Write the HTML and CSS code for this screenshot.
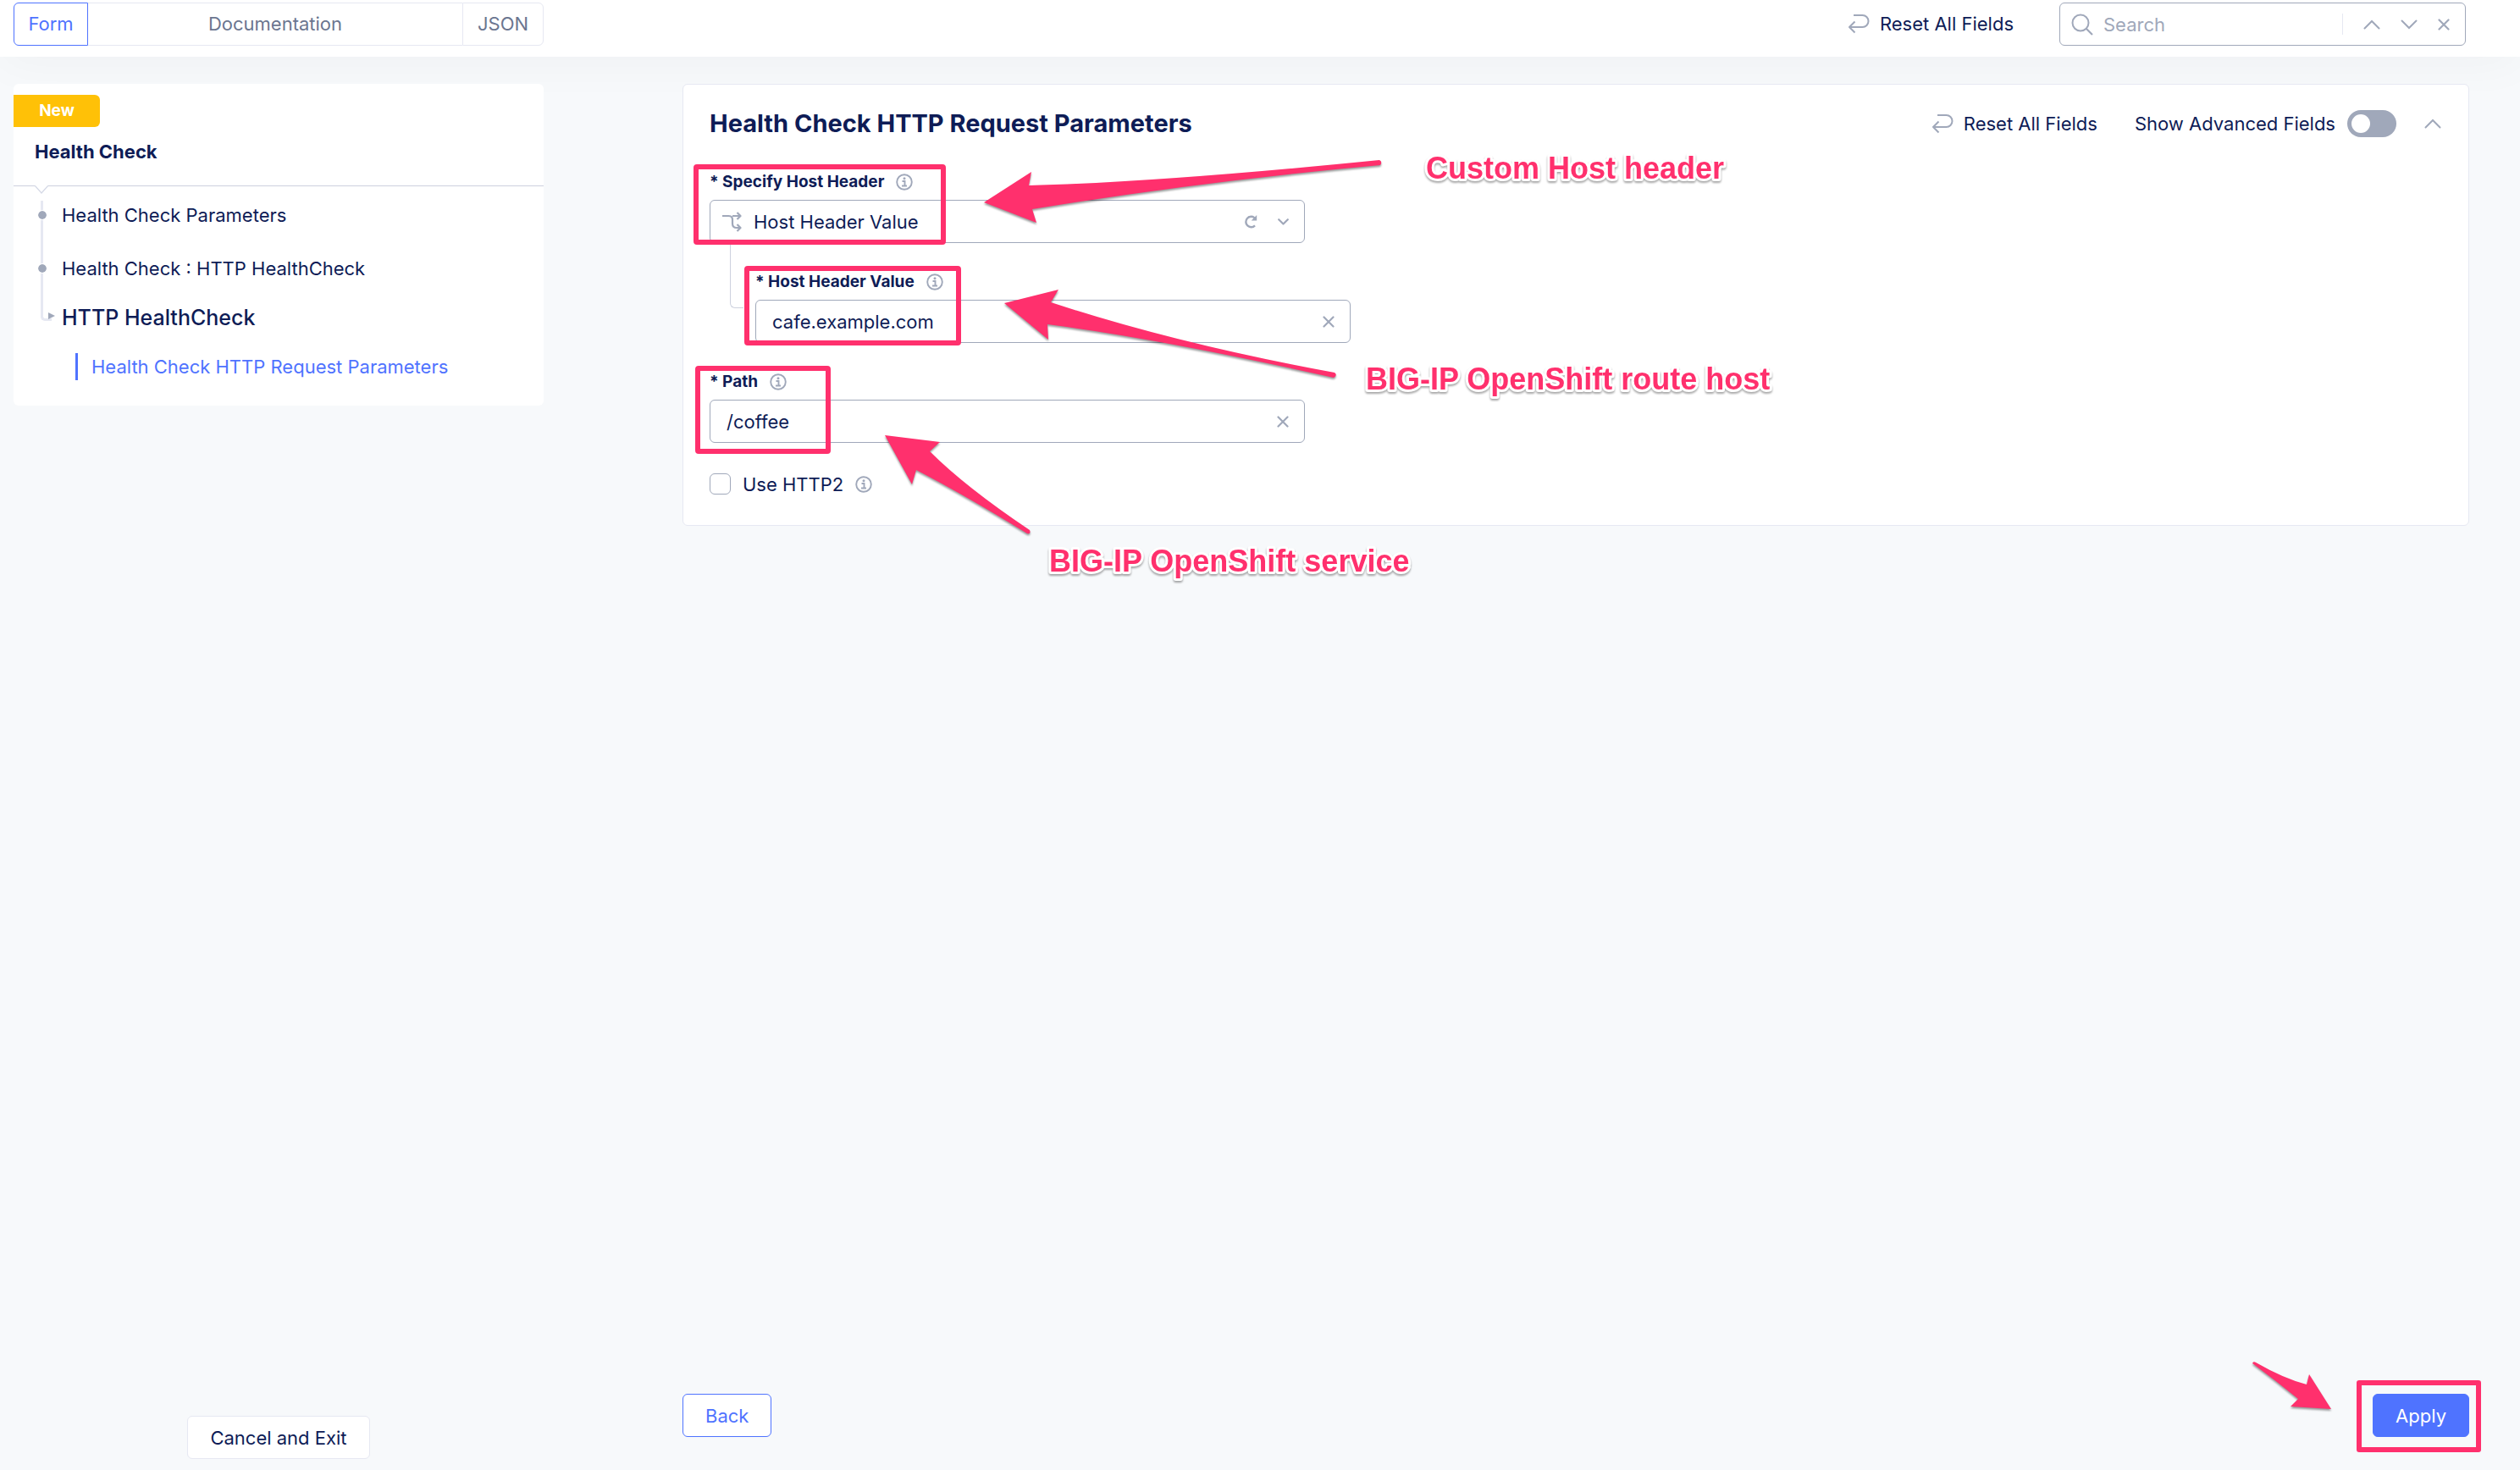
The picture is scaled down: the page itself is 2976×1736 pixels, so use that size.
FILE: index.html
```html
<!DOCTYPE html>
<html lang="en">
<head>
<meta charset="utf-8">
<title>Health Check</title>
<link rel="stylesheet" href="styles.css">
</head>
<body>
<svg class="sprite" aria-hidden="true">
  <symbol id="i-reset" viewBox="0 0 26 24"><path d="M7 2h10.500a7 7 0 0 1 0 14H2.500M8.500 9.500L2 16l6.500 6.500" fill="none" stroke="currentColor" stroke-width="2" stroke-linejoin="round"/></symbol>
  <symbol id="i-search" viewBox="0 0 26 26"><circle cx="11" cy="11" r="9.500" fill="none" stroke="currentColor" stroke-width="2"/><path d="M17.500 17.500L25 25" stroke="currentColor" stroke-width="2.200"/></symbol>
  <symbol id="i-up" viewBox="0 0 20 12"><path d="M1.500 10.500L10 2l8.500 8.500" fill="none" stroke="currentColor" stroke-width="2" stroke-linecap="round"/></symbol>
  <symbol id="i-down" viewBox="0 0 20 12"><path d="M1.500 1.500L10 10l8.500-8.500" fill="none" stroke="currentColor" stroke-width="2" stroke-linecap="round"/></symbol>
  <symbol id="i-caret" viewBox="0 0 13 8"><path d="M1.200 1.200l5.300 5.300 5.300-5.300" fill="none" stroke="currentColor" stroke-width="2.200" stroke-linecap="round" stroke-linejoin="round"/></symbol>
  <symbol id="i-close" viewBox="0 0 14 14"><path d="M1.500 1.500l11 11M12.500 1.500l-11 11" stroke="currentColor" stroke-width="2.200" stroke-linecap="round"/></symbol>
  <symbol id="i-info" viewBox="0 0 20 20"><circle cx="10" cy="10" r="8.800" fill="none" stroke="currentColor" stroke-width="1.900"/><circle cx="10" cy="5.800" r="1.500" fill="currentColor"/><path d="M7.500 9h3v5M7 14.500h6" fill="none" stroke="currentColor" stroke-width="1.900"/></symbol>
  <symbol id="i-branch" viewBox="0 0 23 24"><path d="M0 5h7.500q4.500 0 4.500 4.500V14q0 5 5 5h4.500M12 5h9.500M17.500 1l4 4-4 4M17.500 15l4 4-4 4" fill="none" stroke="currentColor" stroke-width="2.200" stroke-linejoin="round"/></symbol>
  <symbol id="i-refresh" viewBox="0 0 16 16"><path d="M13 12.300A6.200 6.200 0 1 1 12.800 3.500" fill="none" stroke="currentColor" stroke-width="2.400"/><path d="M15.200 0v6.500H8.700z" fill="currentColor"/></symbol>
</svg>

<header class="topbar">
  <div class="tabs">
    <button class="tab tab-form active" type="button">Form</button>
    <button class="tab tab-docs" type="button">Documentation</button>
    <button class="tab tab-json" type="button">JSON</button>
  </div>
  <div class="tools">
    <button class="reset" type="button"><svg class="ic-reset"><use href="#i-reset"/></svg>Reset All Fields</button>
    <div class="search">
      <svg class="ic-search"><use href="#i-search"/></svg>
      <input type="text" placeholder="Search" aria-label="Search">
      <span class="divider"></span>
      <button class="icon-btn" type="button" aria-label="Previous match"><svg class="ic-chevron"><use href="#i-up"/></svg></button>
      <button class="icon-btn" type="button" aria-label="Next match"><svg class="ic-chevron"><use href="#i-down"/></svg></button>
      <button class="icon-btn" type="button" aria-label="Close search"><svg class="ic-close"><use href="#i-close"/></svg></button>
    </div>
  </div>
</header>

<div class="layout">
  <aside class="side">
    <div class="card">
      <div class="card-head">
        <span class="badge">New</span>
        <h1 class="card-title">Health Check</h1>
      </div>
      <nav class="steps">
        <svg class="notch" viewBox="0 0 16 10"><path d="M0 0L8 9l8-9z" fill="#fff"/><path d="M0 0l8 9 8-9" fill="none" stroke="#d5d9e6" stroke-width="1.300"/></svg>
        <a class="step" href="#parameters">Health Check Parameters</a>
        <a class="step" href="#type">Health Check : HTTP HealthCheck</a>
        <a class="step-group" href="#http">HTTP HealthCheck</a>
        <a class="step-active" href="#request">Health Check HTTP Request Parameters</a>
      </nav>
    </div>
    <button class="btn cancel" type="button">Cancel and Exit</button>
  </aside>

  <main class="main">
    <section class="panel" id="request">
      <div class="panel-head">
        <h2 class="panel-title">Health Check HTTP Request Parameters</h2>
        <button class="reset" type="button"><svg class="ic-reset"><use href="#i-reset"/></svg>Reset All Fields</button>
        <label class="advanced" for="advanced">Show Advanced Fields <input class="toggle" id="advanced" type="checkbox" role="switch"></label>
        <button class="icon-btn" type="button" aria-label="Collapse"><svg class="ic-chevron"><use href="#i-up"/></svg></button>
      </div>

      <div class="fields">
        <div class="field">
          <div class="label"><label for="mode">* Specify Host Header</label><svg class="ic-info"><use href="#i-info"/></svg></div>
          <div class="control">
            <svg class="ic-branch"><use href="#i-branch"/></svg>
            <select id="mode"><option>Host Header Value</option></select>
            <button class="icon-btn" type="button" aria-label="Revert"><svg class="ic-refresh"><use href="#i-refresh"/></svg></button>
            <svg class="ic-caret"><use href="#i-caret"/></svg>
          </div>
        </div>
        <div class="field nested">
          <div class="label"><label for="host">* Host Header Value</label><svg class="ic-info"><use href="#i-info"/></svg></div>
          <div class="control">
            <input id="host" type="text" value="cafe.example.com">
            <button class="icon-btn" type="button" aria-label="Clear host"><svg class="ic-close"><use href="#i-close"/></svg></button>
          </div>
        </div>
        <div class="field">
          <div class="label"><label for="path">* Path</label><svg class="ic-info"><use href="#i-info"/></svg></div>
          <div class="control">
            <input id="path" type="text" value="/coffee">
            <button class="icon-btn" type="button" aria-label="Clear path"><svg class="ic-close"><use href="#i-close"/></svg></button>
          </div>
        </div>
        <div class="check">
          <input class="checkbox" id="http2" type="checkbox">
          <label for="http2">Use HTTP2</label>
          <svg class="ic-info"><use href="#i-info"/></svg>
        </div>
      </div>
    </section>

    <svg class="notes" viewBox="806 99 1330 620">
      <g class="note-box">
        <rect x="822" y="197" width="292" height="89" rx="1"/>
        <rect x="882" y="317" width="250" height="88" rx="1"/>
        <rect x="824" y="435" width="154" height="98" rx="1"/>
      </g>
      <g class="note-arrow">
        <path d="M1162 239L1218 203L1215 219Q1370 215 1629 189Q1633 191 1630 195Q1420 214 1219 247L1224 263Z"/>
        <path d="M1186 358L1250 342L1241 357Q1390 406 1576 440Q1580 443 1575 446Q1370 400 1237 383L1238 401Z"/>
        <path d="M1045 514L1110 522L1098 533Q1140 575 1216 626Q1218 631 1213 630Q1140 585 1082 555L1077 572Z"/>
      </g>
      <g class="note-text">
        <text x="1684" y="211">Custom Host header</text>
        <text x="1613" y="460">BIG-IP OpenShift route host</text>
        <text x="1239" y="675">BIG-IP OpenShift service</text>
      </g>
    </svg>

    <footer class="actions">
      <button class="btn back" type="button">Back</button>
      <div class="apply-wrap">
        <button class="btn apply" type="button">Apply</button>
        <svg class="apply-arrow note-arrow" viewBox="0 0 100 64"><path d="M1 4Q2 1 5 3Q38 22 65 29L68 17L94 58L46 55L55 46Q28 24 1 4Z"/></svg>
      </div>
    </footer>
  </main>
</div>
</body>
</html>
```
FILE: styles.css
```css
:root {
  --navy: #0e1c56;
  --blue: #4f73ff;
  --grey: #a0a8ba;
  --line: #e6e8f2;
  --pink: #ff306d;
}

* { box-sizing: border-box; }

body {
  margin: 0;
  min-height: 100vh;
  display: flex;
  flex-direction: column;
  position: relative;
  overflow-x: hidden;
  background: #f7f9fb;
  color: var(--navy);
  font: 400 22px/28px Inter, "Open Sans", sans-serif;
}

button, input, select {
  margin: 0;
  padding: 0;
  border: 0;
  background: none;
  color: inherit;
  font: inherit;
  outline: 0;
}

a { color: inherit; text-decoration: none; }
h1, h2 { margin: 0; }
svg { display: block; flex: none; color: var(--grey); }

.sprite { position: absolute; width: 0; height: 0; }
.ic-reset { width: 26px; height: 24px; }
.ic-search { width: 26px; height: 26px; }
.ic-chevron { width: 20px; height: 12px; }
.ic-caret { width: 13px; height: 8px; }
.ic-close { width: 14px; height: 14px; }
.ic-info { width: 20px; height: 20px; }
.ic-branch { width: 23px; height: 24px; }
.ic-refresh { width: 16px; height: 16px; }

/* Top bar */
.topbar {
  display: flex;
  justify-content: space-between;
  padding: 3px 64px 13px 16px;
  background: #fff;
  box-shadow: 0 8px 56px rgba(0, 0, 0, .035);
}

.tabs { display: flex; width: 626px; }

.tab {
  height: 51px;
  padding-bottom: 2px;
  border: 1px solid var(--line);
  color: #6b7690;
}

.tab-form { width: 88px; border-radius: 6px 0 0 6px; }
.tab-docs { flex: 1; border-width: 1px 0; }
.tab-json { width: 96px; border-radius: 0 6px 6px 0; }
.tab.active { border-color: var(--blue); color: var(--blue); }

.tools { display: flex; gap: 54px; }

.reset { display: flex; align-items: center; gap: 12px; }
.tools .reset { padding-bottom: 2px; }

.search {
  display: flex;
  align-items: center;
  gap: 24px;
  width: 480px;
  height: 51px;
  padding: 0 18px 0 13px;
  border: 1px solid var(--grey);
  border-radius: 6px;
}

.search input { flex: 1; min-width: 0; margin-left: -12px; }
.search input::placeholder { color: var(--grey); opacity: 1; }
.divider { width: 1px; height: 25px; background: var(--line); }

/* Two-column layout */
.layout {
  flex: 1;
  display: grid;
  grid-template-columns: 626px 1fr;
  gap: 164px;
  padding: 32px 60px 0 16px;
}

.side {
  display: flex;
  flex-direction: column;
  justify-content: space-between;
  align-items: center;
  padding-bottom: 13px;
}

.card {
  align-self: stretch;
  border-radius: 6px;
  background: #fff;
}

.card-head {
  padding: 13px 0 11px;
  border-bottom: 1px solid #cdd1de;
}

.badge {
  display: block;
  width: 102px;
  border-radius: 0 6px 6px 0;
  background: #ffc107;
  color: #fff;
  font-size: 19px;
  font-weight: 700;
  line-height: 38px;
  text-align: center;
}

.card-title {
  padding-left: 25px;
  font-size: 22px;
  font-weight: 700;
  line-height: 58px;
}

.steps {
  position: relative;
  display: flex;
  flex-direction: column;
  padding: 3px 0 30px 57px;
}

.steps::before {
  content: "";
  position: absolute;
  top: 17px;
  left: 32px;
  width: 10px;
  height: 139px;
  border: solid var(--line);
  border-width: 0 0 3px 3px;
  border-radius: 0 0 0 5px;
}

.notch { position: absolute; top: -1px; left: 25px; width: 16px; height: 10px; }

.step { position: relative; line-height: 63px; }

.step::before {
  content: "";
  position: absolute;
  top: 25px;
  left: -29px;
  width: 10px;
  height: 10px;
  border: 1px solid #fff;
  border-radius: 50%;
  background: var(--grey);
  background-clip: padding-box;
}

.step-group {
  position: relative;
  font-size: 25px;
  font-weight: 500;
  line-height: 52px;
}

.step-group::before {
  content: "";
  position: absolute;
  top: 20px;
  left: -16px;
  border: solid transparent;
  border-width: 4px 0 4px 8px;
  border-left-color: var(--grey);
}

.step-active {
  margin: 16px 0 0 16px;
  padding-left: 16px;
  border-left: 3px solid var(--blue);
  color: var(--blue);
  line-height: 32px;
}

/* Buttons */
.icon-btn { display: flex; flex: none; }

.btn {
  height: 51px;
  padding: 0 26px;
  border: 1px solid var(--line);
  border-radius: 6px;
  background: #fff;
}

.back { border-color: var(--blue); color: var(--blue); }
.apply { border-color: var(--blue); background: var(--blue); color: #fff; }

/* Form panel */
.main {
  position: relative;
  display: flex;
  flex-direction: column;
  justify-content: space-between;
  padding-bottom: 39px;
}

.panel {
  padding: 30px 32px 36px 31px;
  border: 1px solid var(--line);
  border-radius: 6px;
  background: #fff;
}

.panel-head { display: flex; align-items: center; height: 32px; }
.panel-title { flex: 1; font-size: 29px; font-weight: 700; line-height: 32px; }

.advanced {
  display: flex;
  align-items: center;
  gap: 14px;
  margin: 0 33px 0 44px;
}

.toggle {
  appearance: none;
  width: 58px;
  height: 32px;
  padding: 5px;
  border-radius: 16px;
  background: var(--grey);
}

.toggle::before {
  content: "";
  display: block;
  width: 22px;
  height: 22px;
  border-radius: 50%;
  background: #fff;
}

.toggle:checked { background: var(--blue); }
.toggle:checked::before { margin-left: auto; }

.fields {
  display: flex;
  flex-direction: column;
  gap: 36px;
  width: 703px;
  margin-top: 43px;
}

.field { position: relative; display: flex; flex-direction: column; gap: 11px; }
.nested { left: 54px; }

.nested::before {
  content: "";
  position: absolute;
  top: -36px;
  left: -30px;
  width: 15px;
  height: 76px;
  border: solid #cdd1de;
  border-width: 0 0 1px 1px;
  border-radius: 0 0 0 6px;
}

.label {
  display: flex;
  align-items: center;
  gap: 14px;
  font-size: 19px;
  font-weight: 700;
  line-height: 20px;
}

.control {
  display: flex;
  align-items: center;
  height: 51px;
  padding: 0 18px 0 14px;
  border: 1px solid var(--grey);
  border-radius: 6px;
}

.control input { flex: 1; padding-left: 5px; }
.control select { flex: 1; appearance: none; padding-left: 14px; }
.ic-caret { margin-left: 24px; }

.check { display: flex; align-items: center; gap: 14px; height: 25px; }

.checkbox {
  appearance: none;
  width: 25px;
  height: 25px;
  border: 1px solid var(--grey);
  border-radius: 6px;
}

.checkbox:checked { background: var(--blue); }

.actions { display: flex; justify-content: space-between; }

/* Annotations drawn over the form */
.notes {
  position: absolute;
  top: 0;
  left: 0;
  width: 1330px;
  height: 620px;
  pointer-events: none;
}

.note-box { fill: none; stroke: var(--pink); stroke-width: 6px; }
.note-arrow { fill: var(--pink); filter: drop-shadow(0 2px 1px rgba(0, 0, 0, .4)); }

.note-text {
  fill: var(--pink);
  stroke: #fff;
  stroke-width: 6px;
  stroke-linejoin: round;
  paint-order: stroke;
  font: 700 36px "Liberation Sans", Arial, sans-serif;
  filter: drop-shadow(0 2px 1px rgba(0, 0, 0, .35));
}

.apply-wrap { position: relative; }

.apply-wrap::after {
  content: "";
  position: absolute;
  inset: -16px -14px -18px -19px;
  border: 6px solid var(--pink);
  border-radius: 3px;
  pointer-events: none;
}

.apply-arrow {
  position: absolute;
  top: -40px;
  left: -143px;
  width: 100px;
  height: 64px;
}
```
